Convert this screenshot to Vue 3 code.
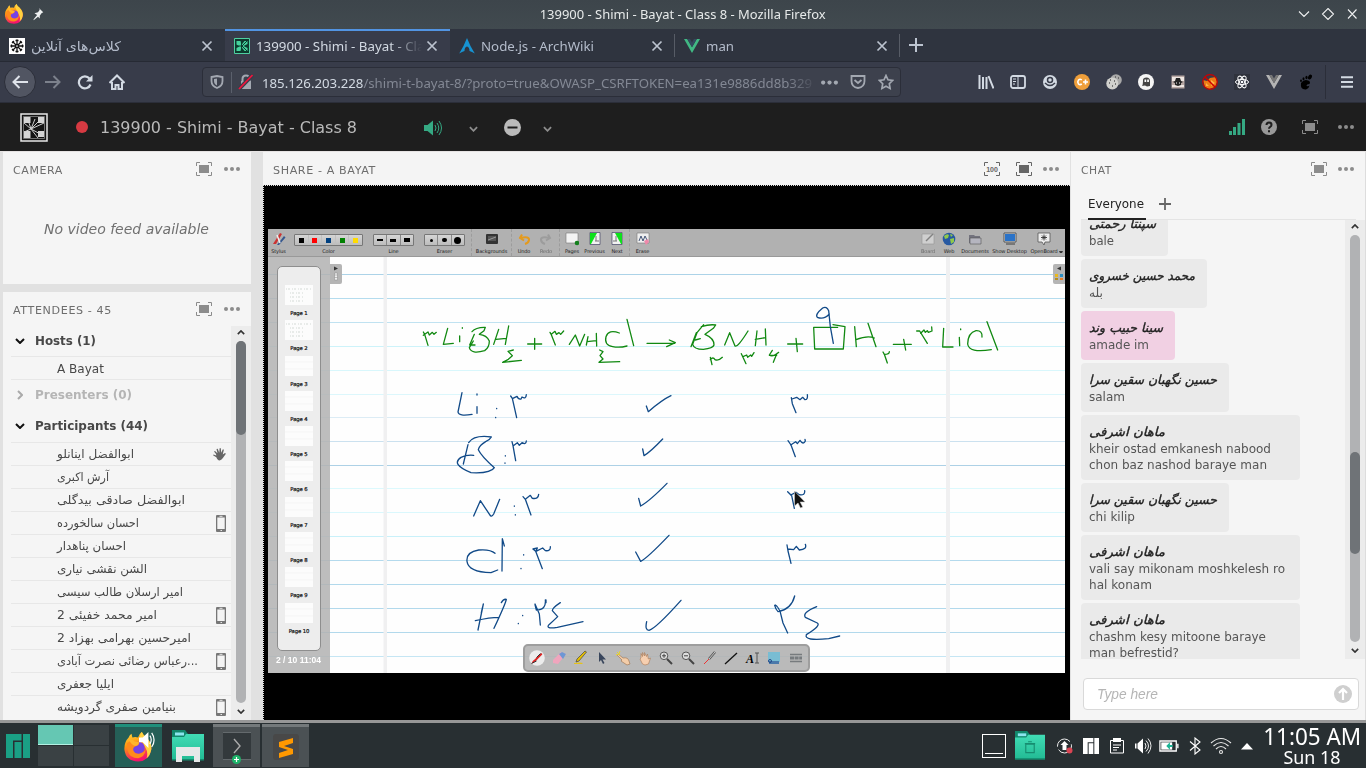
<script setup>
const vFit = {
  mounted(el, { value }) {
    if (!value) return
    const natural = el.getBoundingClientRect().width
    if (natural) el.style.transform = `scaleX(${value / natural})`
  }
}

const tabs = [
  { icon: 'fav-wheel', title: 'کلاس‌های آنلاین', w: 90, width: 225 },
  { icon: 'fav-connect', title: '139900 - Shimi - Bayat - Class 8', active: true, width: 225 },
  { icon: 'fav-arch', title: 'Node.js - ArchWiki', w: 113, width: 225, sep: true },
  { icon: 'fav-vue', title: 'man', w: 28, width: 225, sep: true }
]
const extensions = ['library', 'reader', 'account', 'cplus', 'cookie', 'ghost', 'spy', 'nofox', 'react', 'vuegrey', 'gnome']

const participants = [
  { name: 'ابوالفضل اینانلو', w: 77, icon: 'hand' },
  { name: 'آرش اکبری', w: 52 },
  { name: 'ابوالفضل صادقی بیدگلی', w: 128 },
  { name: 'احسان سالخورده', w: 82, icon: 'phone' },
  { name: 'احسان پناهدار', w: 69 },
  { name: 'الشن نقشی نیاری', w: 90 },
  { name: 'امیر ارسلان طالب سیسی', w: 126 },
  { name: 'امیر محمد خفیئی 2', w: 100, icon: 'phone' },
  { name: 'امیرحسین بهرامی بهزاد 2', w: 134 },
  { name: '...رعباس رضائی نصرت آبادی', w: 141, icon: 'phone' },
  { name: 'ایلیا جعفری', w: 57 },
  { name: 'بنیامین صفری گردویشه', w: 119, icon: 'phone' }
]

const messages = [
  { name: 'سپنتا رحمتی', nw: 67, lines: [['bale', 25]], width: 87 },
  { name: 'محمد حسین خسروی', nw: 106, lines: [['بله', 14]], width: 126 },
  { name: 'سینا حبیب وند', nw: 74, lines: [['amade im', 60]], width: 94, mine: true },
  { name: 'حسین نگهبان سقین سرا', nw: 128, lines: [['salam', 36]], width: 148 },
  { name: 'ماهان اشرفی', nw: 76, lines: [['kheir ostad emkanesh nabood', 182], ['chon baz nashod baraye man', 178]], width: 219 },
  { name: 'حسین نگهبان سقین سرا', nw: 128, lines: [['chi kilip', 46]], width: 148 },
  { name: 'ماهان اشرفی', nw: 76, lines: [['vali say mikonam moshkelesh ro', 196], ['hal konam', 63]], width: 219 },
  { name: 'ماهان اشرفی', nw: 76, lines: [['chashm kesy mitoone baraye', 177], ['man befrestid?', 90]], width: 219 }
]

const rules = [
  [274, '#acd3e8'], [298, '#b4dcee'], [322, '#c0e2f1'], [346, '#cdf3fa'], [370, '#d8f7fc'], [394, '#dcf7fc'],
  [417, '#dcecf5'], [441, '#cbe1ef'], [465, '#add1e6'], [488, '#dcf9fd'], [512, '#daf8fd'], [536, '#c9f1fa'],
  [560, '#b4daed'], [584, '#b2d9ec'], [608, '#b2d9ec'], [632, '#b2d9ec'], [656, '#c5e6f4']
]
const swatches = ['#000', '#f00', '#004080', '#008000', '#ffdb00']
const lineSizes = [2, 3, 4]
const eraserSizes = [3, 4.5, 7]
const dock = ['pen', 'eraser', 'marker', 'arrow', 'finger', 'palm', 'zoomin', 'zoomout', 'laser', 'line', 'text', 'capture', 'keyboard']
const tray = ['update', 'manjaro', 'clip', 'volume', 'battery', 'bluetooth', 'wifi', 'up']
</script>

<template>
  <div class="desktop">
    <svg class="defs" width="0" height="0">
      <linearGradient id="fxg" x1="0" y1="0" x2=".3" y2="1"><stop offset="0" stop-color="#ffe14a" /><stop offset=".45" stop-color="#ff980e" /><stop offset="1" stop-color="#f5156c" /></linearGradient>
      <linearGradient id="foldg" x1="0" y1="0" x2="0" y2="1"><stop offset="0" stop-color="#41dcb5" /><stop offset="1" stop-color="#22bb94" /></linearGradient>
      <symbol id="firefox" viewBox="0 0 32 32">
        <path d="M6 6q1-3 3-4l1 4q3-1 6 0 1-4 4-6 1 3 5 6 6 6 5 13-2 12-14 12.500Q3 31 1.500 19 1 11 6 6z" fill="url(#fxg)" />
        <path d="M18 5q0-3 2-5 1 3 5 6 6 6 5 13-1 6-5 9 2-6-1-11-3-5-6-12z" fill="#ffd23f" />
        <circle cx="16.500" cy="17" r="6.500" fill="#7542e5" />
        <path d="M4 12q4-3 8-2l5 1q1 3-3 4-4 1-3 5 2 4 7 3 4-1 6-4-1 8-8 9-9 0-11-8-1-4-1-8z" fill="#ff8a1c" />
        <path d="M6 8q4-1 6 2l5 1q0 3-4 4-4-1-7-7z" fill="#ffb52b" />
      </symbol>
      <symbol id="pin" viewBox="0 0 16 16"><path d="M9 1l5 5-2 1-2 3 0 3-2-2-5 4 0-1 4-5-3-2 4-1 2-3z" fill="#eef0f1" /></symbol>
      <symbol id="close" viewBox="0 0 16 16"><path d="M3.500 3.500l9 9m0-9l-9 9" stroke="currentColor" stroke-width="1.700" /></symbol>
      <symbol id="full" viewBox="0 0 16 14"><path d="M.5 4V.5H4M12 .5h3.500V4M15.500 10v3.500H12M4 13.500H.5V10" fill="none" stroke="currentColor" /><path d="M3 3h10v8H3z" fill="currentColor" /></symbol>
      <symbol id="dots" viewBox="0 0 16 4"><circle cx="2" cy="2" r="2" /><circle cx="8" cy="2" r="2" /><circle cx="14" cy="2" r="2" /></symbol>
      <symbol id="down" viewBox="0 0 10 6"><path d="M1 1l4 4 4-4" fill="none" stroke="currentColor" stroke-width="2" /></symbol>
      <symbol id="fav-wheel" viewBox="0 0 16 16"><path d="M0 0h16v16H0z" fill="#fff" /><g stroke="#111" stroke-width="1.300"><path d="M8 1.500v13M1.500 8h13M3.500 3.500l9 9M12.500 3.500l-9 9" /><circle cx="8" cy="8" r="1.500" fill="#fff" /><path d="M6.500 2.500h3m-3 11h3M2.500 6.500v3m11-3v3M3 5l2-2m6 0l2 2M3 11l2 2m6 0l2-2" /></g></symbol>
      <symbol id="fav-connect" viewBox="0 0 16 16"><path d="M.5.5h15v15H.5z" fill="#0d3b2e" stroke="#4fd0a1" /><path d="M2.500 3h4l1 4 3-4 3 0v3l-4 2 4 2v3h-3l-3-4-1 4h-4v-3l3-1.500-3-2z" fill="#45d39d" /><path d="M7.500 2v12M3 8h5l5-5M8 8l5 5" stroke="#0d3b2e" fill="none" /></symbol>
      <symbol id="fav-arch" viewBox="0 0 16 16"><path d="M8 0Q5 8 .2 15.500q3-2 5.300-2.500Q5.500 9 8 8.500q2.500.5 2.500 4.500 2.300.500 5.300 2.500Q11 8 8 0z" fill="#1793d1" /></symbol>
      <symbol id="fav-vue" viewBox="0 0 16 14"><path d="M0 0h3.200L8 8.300 12.800 0H16L8 14z" fill="#41b883" /><path d="M3.200 0H6l2 3.500L10 0h2.800L8 8.300z" fill="#34495e" /></symbol>
      <symbol id="vuegrey" viewBox="0 0 16 16"><path d="M0 1h3.200L8 9.300 12.800 1H16L8 15z" fill="#b4b4b4" /><path d="M3.200 1H6l2 3.500L10 1h2.800L8 9.300z" fill="#777" /></symbol>
      <symbol id="library" viewBox="0 0 16 16"><path d="M1.500 1v14M5 3v12M8.500 3v12M10.500 2l5 12.500" stroke="#d3dae3" stroke-width="2" /></symbol>
      <symbol id="reader" viewBox="0 0 16 16"><rect x="1" y="2" width="14" height="12" rx="2" fill="none" stroke="#d3dae3" stroke-width="1.800" /><path d="M8 2v12M3 5h3M3 7.500h3M3 10h2" stroke="#d3dae3" /></symbol>
      <symbol id="account" viewBox="0 0 16 16"><circle cx="8" cy="8" r="7" fill="#d3dae3" /><circle cx="8" cy="6" r="2.500" fill="#d3dae3" stroke="#383c4a" stroke-width="1.500" /><path d="M3 9q5 5 10 0" fill="none" stroke="#383c4a" stroke-width="1.500" /></symbol>
      <symbol id="cplus" viewBox="0 0 16 16"><circle cx="8" cy="8" r="8" fill="#ef9f3b" /><path d="M7.800 6Q6 4.500 4.500 6q-1.500 2 0 4 1.500 1.300 3.300 0M9 8h5m-2.500-2.500v5" fill="none" stroke="#fff" stroke-width="1.600" /></symbol>
      <symbol id="cookie" viewBox="0 0 16 16"><circle cx="10" cy="6" r="5.800" fill="#a8a8a8" /><circle cx="6.300" cy="9.500" r="6" fill="#d0d0cd" /><path d="M3 9h1m2 3h1m1-5h1m-5-1h1m4 4h1m2-6h1m-4-1h1" stroke="#555" stroke-width="1.300" /></symbol>
      <symbol id="ghost" viewBox="0 0 16 16"><circle cx="8" cy="8" r="8" fill="#f5f5f5" /><path d="M4 12q1-1 1-6 0-2.500 3.500-2.500T12 7v5l-3 .5-2-1z" fill="#444" /><path d="M6.500 5.500h1.700v2.500H6.500zm2.700 0h1.700v2.500H9.200z" fill="#fff" /></symbol>
      <symbol id="spy" viewBox="0 0 16 16"><path d="M1.500 1.500h13v13h-13z" fill="#b8a8a4" /><path d="M2 3h12v4H2zM2 11h12v2H2z" fill="#eee6e2" /><path d="M3 8l2-1 1-3h4l1 3 2 1-2 1 0 2-3 1-3-1V9z" fill="#222" /><path d="M6 9h1m2 0h1" stroke="#fff" /></symbol>
      <symbol id="nofox" viewBox="0 0 16 16"><path d="M1 6l4 1 3-3 6-1 1 5-2 5-6 2-4-2z" fill="#ee7b14" /><path d="M9 6l4 3-4 3zM4 9l3 3H4z" fill="#ffb347" /><circle cx="8" cy="8" r="7.300" fill="none" stroke="#c00" stroke-width="1.200" /><path d="M3 3l10 10" stroke="#c00" stroke-width="1.400" /></symbol>
      <symbol id="react" viewBox="0 0 16 16"><path d="M0 0h16v16H0z" fill="#2f323c" /><g fill="none" stroke="#fff"><ellipse cx="8" cy="8" rx="6.500" ry="2.600" /><ellipse cx="8" cy="8" rx="6.500" ry="2.600" transform="rotate(60 8 8)" /><ellipse cx="8" cy="8" rx="6.500" ry="2.600" transform="rotate(120 8 8)" /></g><circle cx="8" cy="8" r="1.300" fill="#fff" /></symbol>
      <symbol id="gnome" viewBox="0 0 16 16"><path d="M3 9q3-4 7-2.500 3 1 1.500 3.500-3 0-3 2 2 .5 3-.5-.5 3-3.500 4Q2 16 3 9z" /><ellipse cx="12" cy="3" rx="1.800" ry="2.600" transform="rotate(25 12 3)" /><ellipse cx="8.500" cy="3.500" rx="1.100" ry="1.800" /><ellipse cx="5.500" cy="4.800" rx="1" ry="1.500" /><ellipse cx="3" cy="6.800" rx=".9" ry="1.200" /></symbol>
      <symbol id="connect" viewBox="0 0 28 29"><path d="M1 1h26v27H1z" fill="#151515" stroke="#e8e8e8" stroke-width="1.500" /><path d="M3.500 3.500h21v22h-21z" fill="none" stroke="#999" stroke-width=".7" /><path d="M4 4h6.500v6H4zM18 4h6v6h-6zM4 18h6.500v7H4zM18 18h6v6h-6z" fill="#d5d5d5" /><path d="M11 16L4 10m7 6L9 10m2 6l-7 3m7-3l7-7m-7 7l4-10m-4 10l13-6m-13 6l13 7m-13-7l7 9" stroke="#ccc" fill="none" /></symbol>
      <symbol id="hand" viewBox="0 0 13 13"><path d="M3 6L1 3.500l1-.5 2.500 2.300L3.500 1l1.200-.2 1.600 4L6.600.3h1.300l.2 4.500 1.800-3.600 1 .5-1.200 4.800 2.300-1.600.9.900-3.200 4.500Q8 13 5.500 12.300 4 11.500 3.300 9.300L0 7.300l.6-.9 2.700 1z" fill="#666" /></symbol>
      <symbol id="phone" viewBox="0 0 10 17"><rect width="10" height="17" rx="1" fill="#777" /><path d="M1.300 2.500h7.400v11.500H1.300z" fill="#f4f4f4" /><path d="M3.500 1.300h3M4.500 15.500h1.500" stroke="#f4f4f4" stroke-width=".9" /></symbol>
      <symbol id="pen" viewBox="0 0 16 16"><circle cx="8" cy="8" r="7.800" fill="#ececec" /><path d="M2.500 13.500q1-3 3-4l6-6 1.500-.3.300 1.300-7 7z" fill="#d22" /><path d="M7.500 7.500l4-4M2.500 13.500l5-2.500" stroke="#333" /></symbol>
      <symbol id="eraser" viewBox="0 0 16 16"><path d="M2 10l8-8 5 2-8 10-5-1z" fill="#f0a5bd" /><path d="M8 4l3-2 4 2-3 5z" fill="#6d97d4" /></symbol>
      <symbol id="marker" viewBox="0 0 16 16"><path d="M2 13q6-1 9 0l-1 1H2z" fill="#e5c31a" /><path d="M4 12l1-3 8-8 1.500 1L7 11z" fill="#e6c000" stroke="#444" stroke-width=".7" /></symbol>
      <symbol id="arrow" viewBox="0 0 16 16"><path d="M5 2v10l2-2 2 4 1.500-1-2-3.500H12z" fill="#39465c" /></symbol>
      <symbol id="finger" viewBox="0 0 16 16"><path d="M3 4l5 4q5-1 6 3l1 3-3 1-6-4 1-1-5-5z" fill="#f3cda9" stroke="#9a714e" stroke-width=".6" /><path d="M2 2l3 3M5 1l-1 3M1 5l3-1" stroke="#e6d32c" /></symbol>
      <symbol id="palm" viewBox="0 0 16 16"><path d="M4 8V3.500l1.500 3V2.500l2 3.500V2.500l2 4 1-2.500.8 5 2.200-1-2 6q-4 2-6 0L3 9z" fill="#f6cfb0" stroke="#aa7955" stroke-width=".6" /></symbol>
      <symbol id="zoomin" viewBox="0 0 16 16"><path d="M9 9l5 5" stroke="#444" stroke-width="2" /><circle cx="6" cy="5.800" r="3.800" fill="#ddd" stroke="#555" /><path d="M4 5.800h4m-2-2v4" stroke="#444" /></symbol>
      <symbol id="zoomout" viewBox="0 0 16 16"><path d="M9 9l5 5" stroke="#444" stroke-width="2" /><circle cx="6" cy="5.800" r="3.800" fill="#ddd" stroke="#555" /><path d="M4 5.800h4" stroke="#444" /></symbol>
      <symbol id="laser" viewBox="0 0 16 16"><path d="M2 14l6-6" stroke="#e33" /><path d="M7 9l6-7" stroke="#555" stroke-width="2.500" /><path d="M7 9l6-7" stroke="#ccc" /></symbol>
      <symbol id="line" viewBox="0 0 16 16"><path d="M2 14L14 3" stroke="#111" stroke-width="1.300" /></symbol>
      <symbol id="capture" viewBox="0 0 16 16"><path d="M2 2h12v10H2z" fill="#79bdd3" /><path d="M3 11h10v3H3z" fill="#4b79aa" /><circle cx="4" cy="11" r="1.500" fill="none" stroke="#234b8b" /></symbol>
      <symbol id="keyboard" viewBox="0 0 16 16"><path d="M2 4.500h12M2 11.500h12" stroke="#777b7e" stroke-width="1.300" /><path d="M2 8h12" stroke="#777b7e" stroke-width="3" stroke-dasharray="4 .6" /></symbol>
      <symbol id="folder" viewBox="0 0 32 32"><path d="M0 0h13l3 4v5H0z" fill="#12886c" /><path d="M0 7h12l2-3h18v26H0z" fill="url(#foldg)" /><path d="M3 2.500h9v3H3z" fill="#8ce5ee" /><path d="M0 29h32v1.500H0z" fill="#138c6e" /></symbol>
      <symbol id="manjaro" viewBox="0 0 24 24"><path d="M0 0h15.500v6.500H7V24H0zM8.500 8h7v16h-7zM17 0h7v24h-7z" fill="currentColor" /></symbol>
      <symbol id="update" viewBox="0 0 18 18"><circle cx="8.500" cy="9" r="7" fill="none" stroke="#eee" stroke-dasharray="18 3" /><path d="M8.500 4l4 4h-2v5h-4V8h-2z" fill="#fff" /><circle cx="13.500" cy="13.500" r="3" fill="#da4453" /></symbol>
      <symbol id="clip" viewBox="0 0 18 18"><path d="M2.500 3.500h13v12.500h-13z" fill="none" stroke="#fff" /><path d="M5 1h8v4H5z" fill="#fff" /><path d="M5 8h8M5 10.500h6M5 13h4" stroke="#fff" /></symbol>
      <symbol id="volume" viewBox="0 0 18 18"><path d="M1 6.500h1.500v5H1zM3.500 6.500L9 1.500v15l-5.500-5z" fill="#fff" /><path d="M11 6q2 3 0 6M12 3.500q5 5.500 0 11M14 1.500q6 7 0 15" fill="none" stroke="#eee" /></symbol>
      <symbol id="battery" viewBox="0 0 22 14"><path d="M1 1.500h18v11H1z" fill="none" stroke="#fff" stroke-width="1.400" /><path d="M2.500 3h12v8h-12z" fill="#fff" /><path d="M20 4.500h1.500v5H20z" fill="#fff" /><path d="M8 7l4-4v3h3v2h-3v3z" fill="#1ab394" /></symbol>
      <symbol id="bluetooth" viewBox="0 0 18 18"><path d="M4 4.500l10 8.500-5 4V1l5 4L4 13.500" fill="none" stroke="#fff" stroke-width="1.100" /></symbol>
      <symbol id="wifi" viewBox="0 0 22 18"><g fill="none" stroke="#e8e8e8" stroke-width="1.100"><path d="M1 6q10-9 20 0M3.500 9q7.500-7 15 0M6 12q5-5 10 0" /><circle cx="11" cy="15" r="1.500" /></g></symbol>
      <symbol id="up" viewBox="0 0 18 18"><path d="M3 12.500L9 6l6 6.500z" fill="#fff" /></symbol>
    </svg>

    <header class="titlebar">
      <svg class="i20"><use href="#firefox" /></svg>
      <svg class="pin"><use href="#pin" /></svg>
      <span class="wtitle"><span v-fit="286" class="fitc">139900 - Shimi - Bayat - Class 8 - Mozilla Firefox</span></span>
      <svg class="winctl" viewBox="0 0 60 12"><path d="M1 3.500l5 5 5-5M30 .5L35.500 6 30 11.500 24.500 6zM50 1.500l8.500 9m0-9l-8.500 9" fill="none" stroke="#eff0f1" stroke-width="1.100" /></svg>
    </header>

    <nav class="tabs">
      <div v-for="t in tabs" :key="t.icon" class="tab" :class="{ active: t.active, sep: t.sep }" :style="{ width: t.width + 'px' }">
        <svg class="fav"><use :href="'#' + t.icon" /></svg>
        <span class="tt"><span v-fit="t.w" class="fit">{{ t.title }}</span></span>
        <svg class="tclose"><use href="#close" /></svg>
      </div>
      <svg class="plus" viewBox="0 0 14 14"><path d="M7 0v14M0 7h14" stroke="#bcc4d0" stroke-width="2" /></svg>
    </nav>

    <div class="navbar">
      <span class="back"><svg viewBox="0 0 16 16"><path d="M16 8H2M7.500 2L1.500 8l6 6" fill="none" stroke="#dfe3ea" stroke-width="2" /></svg></span>
      <svg class="nb" viewBox="0 0 16 16"><path d="M0 8h14M8.500 2l6 6-6 6" fill="none" stroke="#7c818c" stroke-width="2" /></svg>
      <svg class="nb" viewBox="0 0 16 16"><path d="M13.500 10.500A6 6 0 1 1 12.500 4.500" fill="none" stroke="#d3dae3" stroke-width="2.200" /><path d="M15.500 1v6.500H9z" fill="#d3dae3" /></svg>
      <svg class="nb" viewBox="0 0 16 16"><path d="M.5 9L8 1.500 15.500 9M3 8v7h3.500v-4h3v4H13V8" fill="none" stroke="#d3dae3" stroke-width="2" /></svg>
      <div class="url">
        <svg class="sh" viewBox="0 0 14 14"><path d="M1.500 2L7 1l5.500 1v4q0 5-5.500 7-5.500-2-5.500-7z" fill="none" stroke="#a3a8b1" stroke-width="1.800" /><path d="M7 3.500v7Q4 9 4 6V4z" fill="#a3a8b1" /></svg>
        <i class="usep"></i>
        <svg class="lock" viewBox="0 0 16 16"><path d="M4.500 7V5q0-3.500 3.500-3.500T11.500 5v2" fill="none" stroke="#a3a8b1" stroke-width="2" /><path d="M3 7h10v8H3z" fill="#a3a8b1" /><path d="M1 15L14.500 1" stroke="#383c4a" stroke-width="4" /><path d="M1 15L14.500 1" stroke="#f0143c" stroke-width="1.800" /></svg>
        <span class="utext"><b>185.126.203.228</b>/shimi-t-bayat-8/?proto=true&amp;OWASP_CSRFTOKEN=ea131e9886dd8b329</span>
        <svg class="udots"><use href="#dots" /></svg>
        <svg class="u16" viewBox="0 0 16 16"><path d="M1.500 2h13v5q0 6-6.500 7-6.500-1-6.500-7z" fill="none" stroke="#a3a8b1" stroke-width="1.800" /><path d="M4.500 6L8 9l3.500-3" fill="none" stroke="#a3a8b1" stroke-width="1.800" /></svg>
        <svg class="u16" viewBox="0 0 16 16"><path d="M8 1.500l2 4.300 4.700.6-3.400 3.300.8 4.700L8 12.200l-4.100 2.200.8-4.700L1.300 6.400 6 5.800z" fill="none" stroke="#a3a8b1" stroke-width="1.700" /></svg>
      </div>
      <div class="exts"><span v-for="e in extensions" :key="e"><svg><use :href="'#' + e" /></svg></span></div>
      <i class="nsep"></i>
      <svg class="menu" viewBox="0 0 12 12"><path d="M0 1.200h12M0 6h12M0 10.800h12" stroke="#d3dae3" stroke-width="2" /></svg>
    </div>

    <div class="appbar">
      <svg class="clogo"><use href="#connect" /></svg>
      <i class="rec"></i>
      <span class="mtitle"><span v-fit="257" class="fit">139900 - Shimi - Bayat - Class 8</span></span>
      <svg class="spk" viewBox="0 0 18 16"><path d="M0 5h3.500L9 .5v15L3.500 11H0z" fill="#35a983" /><path d="M11 5q2 3 0 6M13 3q3.500 5 0 10M15 1q5 7 0 14" fill="none" stroke="#35a983" /></svg>
      <svg class="cv c1"><use href="#down" /></svg>
      <svg class="minus" viewBox="0 0 17 17"><circle cx="8.500" cy="8.500" r="8.500" fill="#bababa" /><path d="M3.500 8.500h10" stroke="#1e1e1e" stroke-width="2" /></svg>
      <svg class="cv c2"><use href="#down" /></svg>
      <div class="aright">
        <svg class="bars" viewBox="0 0 16 16"><path d="M0 12h3v4H0zM4 8h3v8H4zM8.500 4h3v12h-3zM13 0h3v16h-3z" fill="#35a983" /></svg>
        <svg class="help" viewBox="0 0 16 16"><circle cx="8" cy="8" r="8" fill="#999" /><path d="M5.500 6q0-2.500 2.500-2.500T10.500 6q0 1.200-1.300 1.800Q8 8.400 8 9.800M8 11.300v2" fill="none" stroke="#1e1e1e" stroke-width="2" /></svg>
        <svg class="fs"><use href="#full" /></svg>
        <svg class="dt"><use href="#dots" /></svg>
      </div>
    </div>

    <main class="pods">
      <div class="left">
        <section class="camera">
          <div class="phead"><span><span v-fit="50" class="fit">CAMERA</span></span><svg class="fs"><use href="#full" /></svg><svg class="dt"><use href="#dots" /></svg></div>
          <p><span v-fit="165" class="fitc">No video feed available</span></p>
        </section>
        <section class="attendees">
          <div class="phead"><span><span v-fit="99" class="fit">ATTENDEES - 45</span></span><svg class="fs"><use href="#full" /></svg><svg class="dt"><use href="#dots" /></svg></div>
          <div class="abody">
            <div class="alist">
              <div class="grp g1"><svg><use href="#down" /></svg><b v-fit="61" class="fit">Hosts (1)</b></div>
              <div class="row host"><span v-fit="47" class="fit">A Bayat</span></div>
              <div class="grp g2 off"><svg><use href="#down" /></svg><b v-fit="97" class="fit">Presenters (0)</b></div>
              <div class="grp g3"><svg><use href="#down" /></svg><b v-fit="113" class="fit">Participants (44)</b></div>
              <div v-for="p in participants" :key="p.name" class="row">
                <span v-fit="p.w" class="fit" dir="rtl">{{ p.name }}</span>
                <svg v-if="p.icon" :class="p.icon"><use :href="'#' + p.icon" /></svg>
              </div>
            </div>
            <div class="sbar"><svg class="sup"><use href="#down" /></svg><div class="track"><i class="t1"></i></div><svg><use href="#down" /></svg></div>
          </div>
        </section>
      </div>

      <section class="share">
        <div class="phead">
          <span><span v-fit="103" class="fit">SHARE - A BAYAT</span></span>
          <svg class="fs f100" viewBox="0 0 16 14"><path d="M.5 4V.5H4M12 .5h3.500V4M15.500 10v3.500H12M4 13.500H.5V10" fill="none" stroke="currentColor" /><text x="8" y="9.500" text-anchor="middle" font-size="7" letter-spacing="0" font-weight="bold" font-family="Liberation Sans, sans-serif" fill="currentColor">100</text></svg>
          <svg class="fs"><use href="#full" /></svg><svg class="dt"><use href="#dots" /></svg>
        </div>
        <div class="stage">
          <div class="board">
            <div class="btools">
              <div class="bt"><svg viewBox="0 0 14 14"><path d="M1 12L8 1l2 1-6 10z" fill="#c33" /><path d="M5 13l7-9 1.500 1.500L7 13z" fill="#35578e" /><path d="M5 3l3 8" stroke="#eee" stroke-width="1.500" /></svg><em>Stylus</em></div>
              <div class="bt color"><div class="box"><i v-for="c in swatches" :key="c"><u :style="{ background: c }"></u></i></div><em>Color</em></div>
              <div class="bt three"><div class="box"><i v-for="s in lineSizes" :key="s"><u class="dash" :style="{ height: s + 'px' }"></u></i></div><em>Line</em></div>
              <div class="bt three"><div class="box"><i v-for="s in eraserSizes" :key="s"><u class="dot" :style="{ width: s + 'px', height: s + 'px' }"></u></i></div><em>Eraser</em></div>
              <i class="bsep s1"></i>
              <div class="bt bg"><svg viewBox="0 0 14 14"><rect x="1" y="2" width="12" height="10" rx="1" fill="#333" /><path d="M3 4h8v5H3z" fill="#555" /><path d="M3 8l8-3" stroke="#999" /></svg><em>Backgrounds</em></div>
              <i class="bsep"></i>
              <div class="bt w22"><svg viewBox="0 0 14 14"><path d="M5 2.500L3 6l4 2.500M3.500 6q9-2 8.500 2-.5 3-4 4" fill="none" stroke="#e49a1d" stroke-width="2" /></svg><em>Undo</em></div>
              <div class="bt w22 dis"><svg viewBox="0 0 14 14"><path d="M9 2.500L11 6 7 8.500M10.500 6Q1.500 4 2 8q.5 3 4 4" fill="none" stroke="#888" stroke-width="2" /></svg><em>Redo</em></div>
              <i class="bsep s2"></i>
              <div class="bt w22"><svg viewBox="0 0 14 14"><path d="M1 1h12v10H1z" fill="#f4f4f4" stroke="#777" stroke-width=".6" /><circle cx="12" cy="11" r="2.300" fill="#14801d" /></svg><em>Pages</em></div>
              <div class="bt w24"><svg viewBox="0 0 14 14"><path d="M2 .5h10v12H2z" fill="#f2f2f2" stroke="#446" stroke-width=".7" /><path d="M2 1h7L3 12H2z" fill="#0ee01c" /><path d="M7 9h4M8 4v5" stroke="#777" /></svg><em>Previous</em></div>
              <div class="bt w22"><svg viewBox="0 0 14 14"><path d="M2 .5h10v12H2z" fill="#f2f2f2" stroke="#446" stroke-width=".7" /><path d="M12 1H5l6 11h1z" fill="#0ee01c" /><path d="M3 9h4M6 4v5" stroke="#777" /></svg><em>Next</em></div>
              <i class="bsep"></i>
              <div class="bt w24"><svg viewBox="0 0 14 14"><path d="M1 1h12v10H1z" fill="#eee" stroke="#777" stroke-width=".6" /><path d="M3 9l2-5 2 5 2-5 2 4" fill="none" stroke="#457" /><path d="M8 9l4-2 1 3-3 3z" fill="#e8a" /></svg><em>Erase</em></div>
              <div class="bright">
                <div class="bt w20 dis"><svg viewBox="0 0 14 14"><path d="M1 2h12v10H1z" fill="#eee" stroke="#777" stroke-width=".6" /><path d="M5 9l7-7" stroke="#555" stroke-width="1.500" /></svg><em>Board</em></div>
                <div class="bt w22"><svg viewBox="0 0 14 14"><circle cx="7" cy="7" r="6.300" fill="#2759a2" /><path d="M2 4q3-3 5-1l-1 3-3 1zM8 7l4-1v4l-3 2zM8 2l3 1-2 2z" fill="#90c84b" /></svg><em>Web</em></div>
                <div class="bt w30"><svg viewBox="0 0 14 14"><path d="M1 3h5l1 1h5v7H1z" fill="#73737e" /><path d="M2 6h11v6H2z" fill="#b5b5bf" stroke="#555" stroke-width=".6" /></svg><em>Documents</em></div>
                <div class="bt w39"><svg viewBox="0 0 14 14"><path d="M1 1h12v9H1z" fill="#ddd" stroke="#555" /><path d="M2 2h10v7H2z" fill="#2b73c8" /><path d="M3 12h9" stroke="#777" stroke-width="2" /></svg><em>Show Desktop</em></div>
                <div class="bt w30"><svg viewBox="0 0 14 14"><path d="M1 1h12v9H8l-1 3-2-3H1z" fill="#eee" stroke="#555" stroke-width=".8" /><path d="M4 5.500h6M7 2.500v6M5 3.500l4 4m0-4l-4 4" stroke="#333" stroke-width=".9" /></svg><em>OpenBoard</em></div>
                <i class="tri"></i>
              </div>
            </div>
            <div class="paper">
              <svg class="ink" viewBox="268 257 797 416">
                <path d="M268 257h797v416H268z" fill="#fefefe" />
                <path v-for="r in rules" :key="r[0]" :d="`M268 ${r[0] + .5}h797`" :stroke="r[1]" stroke-width="1" />
                <path d="M383.500 257h3.500v416h-3.500zM946 257h4v416h-4z" fill="#f0f0f1" />
                <g fill="none" stroke-width="3.900" stroke-linecap="round" stroke-linejoin="round">
                  <g stroke="#118911" transform="translate(262 150) scale(.33333)">
                    <path d="M484 546l4 7 10 33M484 556l14-10 4 9 9-8 5 6 7-6" />
                    <path d="M557 535l-13 48 30-3M601 533v2M593 558v17" />
                    <path d="M637 553l-14 32 16 0M630 545q12-14 40-13l-4 10-14 11q22 2 30 20 0 20-14 29-40 12-46-9l12-20" />
                    <path d="M710 538l-15 45M740 528l-10 55M702 568l31-3M754 600l-16 4 13 13-12 11-17 9 56-6M797 582h42M818 565v33" />
                    <path d="M864 547l4 7 12 31M868 553l11-9 4 9 8-5 5 5 9-10M922 583l18-28 13 33 15-35M978 560l-5 25M1003 550l1 38M975 575l28-3M1013 600l10 5-9 12 9 10-12 10 62-2M1072 549q-32-12-40 11-6 26 20 30 20 4 43-2M1095 508l20 79M1155 580h83M1222 570l18 8-26 12" />
                  </g>
                  <g stroke="#118911" transform="translate(662 150) scale(.33333)">
                    <path d="M103 548l-16 42M100 570l15-4M118 530q25-8 43-5l-7 10-25 18q28 12 27 32-3 10-32 13-28 0-32-15l13-35 20-24" />
                    <path d="M145 622l5 22M145 629q8-10 14 0 10 5 22-7M188 585l15-37 16 40q8 5 39-45M285 543l-5 44M310 537l2 48M280 568l30-5M238 611l14 30M243 620l11-5 3 7 9-7 3 4 7-11" />
                    <path d="M331 601l-9 14q10 8 28-8M322 616l22 0M345 610l-11 27M377 582h45M402 565l4 40M455 532h72M455 532l3 65h86l5-67-36-6M578 530l5 60M618 520l24 70M582 569q35-14 55-5M663 606l4 7 9 26M667 613q15 0 15-8M694 583h54M725 568l6 32M764 543l9 0 23 37M776 550l10-10 4 7 6-5 3 5 11-4-1-12M845 535l-3 56 31 0M896 537v2M892 562l1 25" />
                    <path d="M960 561q2-20-18-19-24 6-25 40 4 28 71 17M975 515l32 85" />
                    <path stroke="#114a88" d="M500 482q-6-14-18-8-24 20-16 28 20 8 36-10M500 482l5 48 9 50" />
                  </g>
                  <g stroke="#114a88" transform="translate(262 380) scale(.33333)">
                    <path d="M600 38l-12 58q2 14 42 7M645 42v3M645 80v20M704 85v1M701 112v1M746 48l5 7 13 58M751 56l14-7q4 10 12 8l3-6q12 8 13-7" />
                    <path d="M618 194l-14 58M620 188q16-24 68-17-4 8-17 14-20 12-22 24 8 18 48 54-10 18-70 15-62-25-30-46 16-8 38-6M730 227v1M729 249v1M750 185l3 12 8 45M753 198l13-10 6 8 8-8q12 7 13-5" />
                    <path d="M635 408l20-46 28 42q5 10 12-2l18-44M757 378v1M760 404v1M783 350l7 8 17 47M790 358l15-12 6 9q18 3 19-12" />
                    <path d="M699 520q-14-13-49-10-38 6-35 34 4 32 72 34l20-8M720 573l1-97 6 22M785 524v1M777 565v1M813 507l8 7 20 52M813 507l13-3-4 10 20-10 8 8q16 2 15-12" />
                    <path d="M664 672l-16 78M662 680l-4 18M640 722q45-10 70-10M718 668q6-12 15-10-2 12-37 87M782 706v1M769 730v1M819 672l13 30 3 33M819 674l4 16q30 0 27-30M852 660l0 8M895 668q-24 16-24 24l16 18q-12 12-26 24-12 14 25 8l77-17" />
                    <path d="M1153 78l6 17q42-36 68-48M1142 207l4 20q20-12 56-50M1130 355l6 23q28-16 79-68M1121 516l15 28q20-10 85-78M1154 725q-6 26 7 26 22-7 96-90" />
                  </g>
                  <g stroke="#114a88" transform="translate(662 380) scale(.33333)">
                    <path d="M388 53l3 18 11 27M390 57l14-5 10 7 8-7 7 7q9 0 7-15M378 182l9 13 13 35M386 195l15-10 5 6 8-10q10 15 16 2l-1-5M377 335l12 12 8 38M386 345l16-8 10 7q18 3 16-12M375 495l3 18 9 37M377 507l18 2 8-10 9 11q24-2 18-17" />
                    <path d="M340 675q8 4 15 22l8 32 14 30M338 676q3 12 10 19 40-7 50-47M464 680q-44 18-34 32l36 17q12 8-33 35-8 20 67 12l33-8" />
                  </g>
                </g>
                <path d="M794.500 491v15l3.500-3 2.500 5 2.200-1-2.500-5h4.800z" fill="#111" stroke="#ccc" stroke-width=".6" />
              </svg>
              <div class="side">
                <div class="thumbs">
                  <div v-for="n in 10" :key="n" class="th">
                    <svg viewBox="0 0 28 20"><path d="M0 0h28v20H0z" fill="#fcfcfc" /><path v-if="n > 2" d="M0 6h28M0 13h28" stroke="#f5f5f5" /><path v-else d="M1 4h26M5 8h14M5 12h14M5 16h14" stroke="#b9c4be" stroke-width=".6" stroke-dasharray="1 1 2 2" /></svg>
                    <em>Page {{ n }}</em>
                  </div>
                </div>
                <strong><span v-fit="45" class="fit">2 / 10 11:04</span></strong>
              </div>
              <div class="handle"><svg viewBox="0 0 12 20"><path d="M4 2.500l4 2-4 2z" fill="#333" /><path d="M4.500 9h3v7h-3zM4.500 11h3m-3 2.500h3" fill="#eee" stroke="#888" stroke-width=".5" /></svg></div>
              <div class="handle hr"><svg viewBox="0 0 12 20"><path d="M8 2.500l-4 2 4 2z" fill="#333" /><path d="M2 10h3v3H2z" fill="#e9b81c" /><path d="M7 10h3v3H7z" fill="#2d8ec0" /><path d="M2 14h3v2H2z" fill="#b58d24" /><path d="M7 14h3v2H7z" fill="#e67b22" /></svg></div>
              <div class="dock">
                <template v-for="d in dock" :key="d">
                  <svg v-if="d === 'text'" viewBox="0 0 16 16"><text x="1" y="12.500" font-size="12" font-style="italic" font-weight="bold" font-family="Liberation Serif, serif">A</text><path d="M10 3h4m-2 0v10m-2 0h4" stroke="#555" /></svg>
                  <svg v-else><use :href="'#' + d" /></svg>
                </template>
              </div>
            </div>
          </div>
        </div>
      </section>

      <section class="chat">
        <div class="phead"><span><span v-fit="31" class="fit">CHAT</span></span><svg class="fs"><use href="#full" /></svg><svg class="dt"><use href="#dots" /></svg></div>
        <div class="ctabs"><span class="ev"><span v-fit="56" class="fit">Everyone</span></span><svg viewBox="0 0 12 12"><path d="M6 0v12M0 6h12" stroke="#666" stroke-width="1.800" /></svg></div>
        <div class="cbody">
          <div class="msgs">
            <div v-for="(m, i) in messages" :key="i" class="msg" :class="{ mine: m.mine }" :style="{ width: m.width + 'px' }">
              <b><span v-fit="m.nw" class="fit" dir="rtl">{{ m.name }}</span></b>
              <p v-for="l in m.lines" :key="l[0]"><span v-fit="l[1]" class="fit">{{ l[0] }}</span></p>
            </div>
          </div>
          <div class="sbar"><svg class="sup"><use href="#down" /></svg><div class="track"><i class="t2"></i></div><svg><use href="#down" /></svg></div>
        </div>
        <div class="input"><span><span v-fit="61" class="fit">Type here</span></span><svg viewBox="0 0 18 18"><circle cx="9" cy="9" r="9" fill="#cfcfcf" /><path d="M9 15V4M5 8l4-4 4 4" fill="none" stroke="#fff" stroke-width="2.200" /></svg></div>
      </section>
    </main>

    <footer class="taskbar">
      <svg class="mj"><use href="#manjaro" /></svg>
      <div class="pager"><i class="on"></i><i></i><i></i><i></i></div>
      <div class="task fx"><svg viewBox="0 0 34 34"><use href="#firefox" x="0" y="1" width="32" height="32" /><path d="M17 7h4l6-6v17l-6-6h-4z" fill="#fff" /><path d="M28.500 5q3 4 0 9M30.500 2q5 7.500 0 15" stroke="#fff" stroke-width="1.300" fill="none" /></svg></div>
      <div class="task files"><svg viewBox="0 0 32 32"><use href="#folder" width="32" height="32" /><path d="M4 17h24v15h-6v-6H10v6H4z" fill="#e6e8e8" /></svg></div>
      <div class="task gray"><svg viewBox="0 0 32 34"><path d="M2 2h28v28H2z" fill="#33393c" /><path d="M2 2h28v1H2zM2 29h28v1H2z" fill="#646a6d" /><path d="M13 9l6 7-6 7" fill="none" stroke="#aaa" stroke-width="1.400" /><circle cx="15.500" cy="29.500" r="4.500" fill="#1eb46a" /><path d="M15.500 27v5M13 29.500h5" stroke="#fff" stroke-width="1.200" /></svg></div>
      <div class="task gray"><svg viewBox="0 0 32 34"><rect x="3" y="4" width="26" height="26" rx="3" fill="#484848" /><path d="M9 12l14-4v5l-9 3 9 3v5L9 28v-5l9-3-9-3z" fill="#ff9800" /></svg></div>
      <div class="trayarea">
        <i class="desk"></i>
        <svg class="tf" viewBox="0 0 32 32"><use href="#folder" width="32" height="32" /><path d="M11.500 14h9v9h-9zM10.500 13.500h11M14 11.500h4" fill="none" stroke="#168d70" stroke-width="1.200" /></svg>
        <span v-for="t in tray" :key="t" :class="t"><svg><use :href="'#' + t" /></svg></span>
        <div class="clock"><b><span v-fit="98" class="fitc">11:05 AM</span></b><small><span v-fit="57" class="fitc">Sun 18</span></small></div>
      </div>
    </footer>
  </div>
</template>

<style>
body { margin: 0; overflow: hidden; }
</style>
<style scoped>
* { box-sizing: border-box; }
svg { display: block; flex: none; }
i, em, b, small, strong { font-style: normal; font-weight: normal; }
u { text-decoration: none; display: block; }
p { margin: 0; }
.defs { position: absolute; }
.fit, .fitc { display: inline-block; white-space: nowrap; transform-origin: left center; }
.fitc { transform-origin: center; }
.desktop { width: 1366px; height: 768px; display: flex; flex-direction: column; overflow: hidden; font-family: "DejaVu Sans", "Noto Sans", sans-serif; font-size: 12px; background: #e1e1e1; }

.titlebar { height: 29px; background: linear-gradient(#3d454b, #414a4f); display: flex; align-items: center; padding-left: 4px; padding-bottom: 1px; font: 13.300px "Noto Sans", sans-serif; color: #e7eaea; }
.i20 { width: 20px; height: 20px; }
.pin { width: 14px; height: 14px; margin-left: 7px; }
.wtitle { flex: 1; text-align: center; padding-left: 23px; }
.winctl { width: 60px; height: 12px; margin-right: 8px; }

.tabs { height: 33px; background: #2f343f; border-bottom: 1px solid #262a34; display: flex; align-items: center; font: 13.300px "Noto Sans", "DejaVu Sans", sans-serif; color: #b4bccb; }
.tab { height: 32px; display: flex; align-items: center; padding: 2px 10px 0 9px; position: relative; }
.tab.active { background: #383c4a; border-top: 2px solid #5294e2; padding-top: 0; color: #d3dae3; }
.tab.sep::after { content: ""; position: absolute; right: 0; top: 5px; bottom: 4px; width: 1px; background: #575c66; }
.fav { width: 16px; height: 16px; margin-right: 6px; }
.tt { flex: 1; overflow: hidden; white-space: nowrap; line-height: 20px; }
.tab.active .tt { -webkit-mask-image: linear-gradient(90deg, #000 135px, transparent 166px); mask-image: linear-gradient(90deg, #000 135px, transparent 166px); }
.tclose { width: 16px; height: 16px; color: #bcc3cf; }
.plus { width: 14px; height: 14px; margin-left: 9px; }

.navbar { height: 41px; background: #383c4a; border-bottom: 1px solid #2b2e39; display: flex; align-items: center; padding-left: 4px; }
.back { width: 32px; height: 32px; border-radius: 50%; background: #515562; border: 1px solid #2b2e39; display: flex; align-items: center; justify-content: center; }
.back svg { width: 16px; height: 16px; }
.nb { width: 16px; height: 16px; margin: 0 7px 0 9px; }
.url { width: 699px; height: 30px; margin-left: 70px; border: 1px solid #2b2e39; border-radius: 4px; background: #3d414d; display: flex; align-items: center; padding-left: 7px; color: #838894; font: 13.230px "Noto Sans", sans-serif; }
.sh { width: 14px; height: 14px; }
.usep { width: 1px; height: 21px; background: #5b606c; margin: 0 6px 0 7px; }
.lock { width: 16px; height: 16px; }
.utext { width: 554px; margin-left: 8px; padding-top: 1px; overflow: hidden; white-space: nowrap; -webkit-mask-image: linear-gradient(90deg, #000 525px, transparent 556px); mask-image: linear-gradient(90deg, #000 525px, transparent 556px); }
.utext b { color: #d3dae3; }
.udots { width: 17px; height: 5px; fill: #a3a8b1; margin-left: 5px; }
.u16 { width: 16px; height: 16px; margin-left: 12px; }
.exts { display: flex; margin-left: 69px; }
.exts span { width: 32px; display: flex; justify-content: center; }
.exts svg { width: 16px; height: 16px; }
.nsep { width: 1px; height: 34px; background: #2b2e39; margin: 0 15px 0 3px; }
.menu { width: 12px; height: 12px; }

.appbar { height: 48px; background: #1e1e1e; display: flex; align-items: center; color: #bababa; padding-left: 20px; }
.clogo { width: 28px; height: 29px; }
.rec { width: 12px; height: 12px; border-radius: 50%; background: #d73a42; margin-left: 28px; }
.mtitle { width: 324px; margin-left: 12px; font-size: 16px; line-height: 20px; padding-top: 2px; }
.spk { width: 18px; height: 16px; margin-top: 1px; }
.cv { width: 9px; height: 6px; color: #8d8d8d; margin-top: 3px; }
.c1 { margin-left: 27px; }
.minus { width: 17px; height: 17px; margin-left: 26px; margin-top: 1px; }
.c2 { margin-left: 22px; }
.aright { margin-left: auto; display: flex; align-items: center; padding-right: 12px; color: #999; }
.bars { width: 16px; height: 16px; margin-right: 16px; }
.help { width: 16px; height: 16px; margin-right: 25px; }
.fs { width: 16px; height: 14px; color: #8c8c8c; }
.dt { width: 16px; height: 4px; fill: #8c8c8c; margin-left: 20px; }

.pods { height: 569px; display: flex; border-top: 1px solid #e6e3e3; background: #e1e1e1; }
.left { width: 251px; padding-left: 3px; display: flex; flex-direction: column; gap: 8px; }
.left section, .chat { background: #f5f5f5; }
.phead { height: 34px; display: flex; align-items: center; color: #6d6d6d; font-size: 11px; letter-spacing: .6px; padding: 0 11px 0 10px; }
.phead > span { flex: 1; padding-top: 3px; }
.phead .dt { margin-left: 12px; }
.camera { height: 132px; }
.camera p { text-align: center; font-style: italic; font-size: 14px; color: #707070; margin-top: 34px; line-height: 18px; padding-right: 1px; }
.attendees { flex: 1; display: flex; flex-direction: column; min-height: 0; }
.abody { flex: 1; display: flex; min-height: 0; }
.alist { width: 228px; padding-left: 8px; color: #484848; }
.grp { display: flex; align-items: center; height: 31px; padding-left: 4px; }
.grp svg { width: 10px; height: 6px; margin-right: 10px; color: #111; }
.grp b { font-weight: bold; font-size: 12px; }
.grp.off { color: #b5b5b5; }
.grp.off svg { transform: rotate(-90deg); color: #aaa; }
.g1 { height: 30px; }
.g2 { height: 30px; }
.g3 { height: 32px; }
.row { height: 23px; border-top: 1px solid #e7e7e7; display: flex; align-items: center; justify-content: space-between; padding-left: 46px; padding-right: 5px; }
.row svg.hand { width: 13px; height: 13px; }
.row svg.phone { width: 10px; height: 17px; }
.host { border-bottom: 1px solid #e7e7e7; height: 24px; padding-top: 1px; }
.sbar { width: 20px; background: #ececec; display: flex; flex-direction: column; align-items: center; }
.sbar svg { width: 8px; height: 5px; color: #333; margin: 6px 0 6px; }
.sbar .sup { transform: rotate(180deg); margin: 4px 0 6px; }
.track { width: 10px; flex: 1; background: #b1b2b4; border-radius: 5px; position: relative; }
.track i { display: block; width: 10px; border-radius: 5px; background: #6f7377; }
.t1 { height: 94px; }
.t2 { height: 102px; margin-top: 217px; }

.share { width: 807px; margin-left: 12px; background: #f4f4f4; display: flex; flex-direction: column; }
.share .phead { height: 33px; padding-right: 11px; }
.share .fs { color: #666; }
.share .phead .dt { margin-left: 11px; }
.share .f100 { margin-right: 16px; }
.stage { flex: 1; background: #000; border: 1px dotted #ddd; border-right: 0; border-bottom: 0; padding: 43px 5px 0 4px; }
.board { width: 797px; height: 444px; display: flex; flex-direction: column; }
.btools { height: 28px; background: #b1b1b1; display: flex; align-items: flex-start; border-bottom: 1px solid #999; }
.bt { width: 21px; display: flex; flex-direction: column; align-items: center; padding-top: 3px; flex: none; }
.bt > svg { width: 14px; height: 14px; }
.bt em { font-size: 5px; line-height: 7px; margin-top: 1.500px; white-space: nowrap; color: #222; font-family: "DejaVu Sans", sans-serif; letter-spacing: -.1px; }
.dis { opacity: .5; }
.color { width: 69px; margin-left: 5px; }
.three { width: 41px; margin-left: 10px; }
.box { width: 100%; height: 12px; margin: 2px 0 0; border: 1px solid #777; border-radius: 1px; background: linear-gradient(#d5d5d5, #bcbcbc); display: flex; }
.box i { flex: 1; display: flex; align-items: center; justify-content: center; }
.three .box i + i { border-left: 1px solid #888; }
.color .box i + i { border-left: 1px solid #c0c0c0; }
.box u { width: 5px; height: 5px; }
.box u.dash { width: 6px; background: #000; }
.box u.dot { border-radius: 50%; background: #000; }
.bsep { width: 1px; height: 27px; border-left: 1px dashed #9c9c9c; margin: 0 1px; }
.s1 { margin-left: 6px; }
.s2 { margin-left: 2px; }
.bg { width: 37px; }
.w20 { width: 20px; } .w22 { width: 22px; } .w24 { width: 23px; } .w30 { width: 30px; } .w39 { width: 39px; }
.bright { display: flex; margin-left: auto; }
.tri { width: 4px; height: 0; margin: 22px 2px 0 0; border-left: 1.500px solid transparent; border-right: 1.500px solid transparent; border-top: 2px solid #333; }
.paper { flex: 1; position: relative; overflow: hidden; display: flex; }
.ink { position: absolute; left: 0; top: 0; width: 797px; height: 416px; }
.side { position: relative; width: 62px; background: rgba(178, 178, 178, .86); padding: 9px 9px 0; display: flex; flex-direction: column; }
.thumbs { width: 44px; height: 385px; border: 1px solid #8e8e8e; border-radius: 5px; background: #ededed; padding-top: 18px; display: flex; flex-direction: column; align-items: center; flex: none; }
.th { height: 35.300px; display: flex; flex-direction: column; align-items: center; flex: none; }
.th svg { width: 28px; height: 20px; }
.th em { font-size: 5.300px; line-height: 7px; margin-top: 5px; color: #111; white-space: nowrap; -webkit-text-stroke: .2px #111; letter-spacing: -.1px; }
.side strong { color: #fff; font: bold 9px "Liberation Sans", sans-serif; margin: 4px 0 0 -1px; width: 50px; }
.handle { position: absolute; left: 62px; top: 7px; width: 12px; height: 20px; background: #b5b5b5; border-radius: 0 2px 2px 0; }
.handle svg { width: 12px; height: 20px; }
.handle.hr { left: auto; right: 0; border-radius: 2px 0 0 2px; }
.dock { position: absolute; left: 255px; top: 387px; width: 287px; height: 28px; background: rgba(176, 176, 176, .88); border: 2px solid #9e9e9e; border-radius: 5px; display: flex; align-items: center; justify-content: space-between; padding: 0 4px; }
.dock svg { width: 16px; height: 16px; }

.chat { width: 295px; margin-left: 1px; display: flex; flex-direction: column; border-right: 1px solid #ddd; }
.chat .phead { padding-right: 11px; }
.chat .phead .dt { margin-left: 11px; }
.ctabs { height: 34px; margin: 0 9px 0 10px; border-bottom: 1px solid #e4e4e4; display: flex; align-items: center; padding-left: 7px; }
.ev { width: 58px; height: 34px; border-bottom: 2px solid #222; color: #222; font-size: 12.500px; line-height: 35px; }
.ctabs svg { width: 12px; height: 12px; margin-left: 13px; margin-top: 2px; }
.cbody { height: 439px; display: flex; padding-left: 10px; overflow: hidden; }
.msgs { width: 264px; display: flex; flex-direction: column; gap: 3px; margin-top: -13px; height: 452px; }
.msg { background: #eaeaea; border-radius: 4px; padding: 9px 0 7px 8px; line-height: 16px; color: #555; flex: none; font-size: 12.500px; }
.msg.mine { background: #f1d0e3; }
.msg b { display: block; color: #222; font-style: italic; height: 17px; font-size: 12.500px; -webkit-text-stroke: .35px #222; }
.msg p { height: 16px; }
.input { height: 32px; margin: 19px 6px 0 12px; border: 1px solid #d9d9d9; border-radius: 4px; background: #fff; display: flex; align-items: center; padding: 0 6px 0 13px; font: italic 14px "Liberation Sans", sans-serif; color: #b5b5b5; }
.input > span { flex: 1; }
.input svg { width: 18px; height: 18px; }

.taskbar { height: 48px; background: #282f32; border-top: 3px solid #979797; display: flex; align-items: center; padding-left: 6px; color: #fff; }
.mj { width: 24px; height: 24px; color: #1aa085; }
.pager { width: 71px; height: 41px; margin-left: 8px; display: grid; grid-template-columns: 35px 35px; grid-template-rows: 20px 20px; gap: 1px; }
.pager i { background: #3a4144; }
.pager .on { background: #65c7b3; border-bottom: 1px solid #b3f0e2; }
.task { width: 47px; height: 43px; display: flex; align-items: center; justify-content: center; margin-left: 2px; }
.task svg { width: 32px; height: 34px; }
.fx { margin-left: 6px; background: #255f57; border-top: 3px solid #208f7b; }
.files svg { width: 32px; height: 32px; }
.gray { background: #4b5154; border-top: 3px solid #74797b; }
.trayarea { margin-left: auto; display: flex; align-items: center; padding-right: 5px; }
.desk { width: 24px; height: 24px; border: 1px solid #fff; margin-right: 9px; display: flex; align-items: flex-end; justify-content: center; }
.desk::after { content: ""; width: 18px; height: 1px; background: #fff; margin-bottom: 3px; }
.tf { width: 30px; height: 30px; margin-right: 7px; }
.trayarea span:not(.fitc) { width: 26px; display: flex; justify-content: center; }
.trayarea span svg { width: 18px; height: 18px; }
.trayarea .battery svg { width: 20px; height: 14px; }
.trayarea .wifi svg { width: 22px; height: 18px; }
.trayarea .manjaro svg { width: 16px; height: 16px; }
.clock { width: 98px; margin-left: 3px; display: flex; flex-direction: column; align-items: center; font-family: "Noto Sans", sans-serif; }
.clock b { font-size: 23.500px; line-height: 24px; }
.clock small { font-size: 17.500px; line-height: 19px; }
</style>
